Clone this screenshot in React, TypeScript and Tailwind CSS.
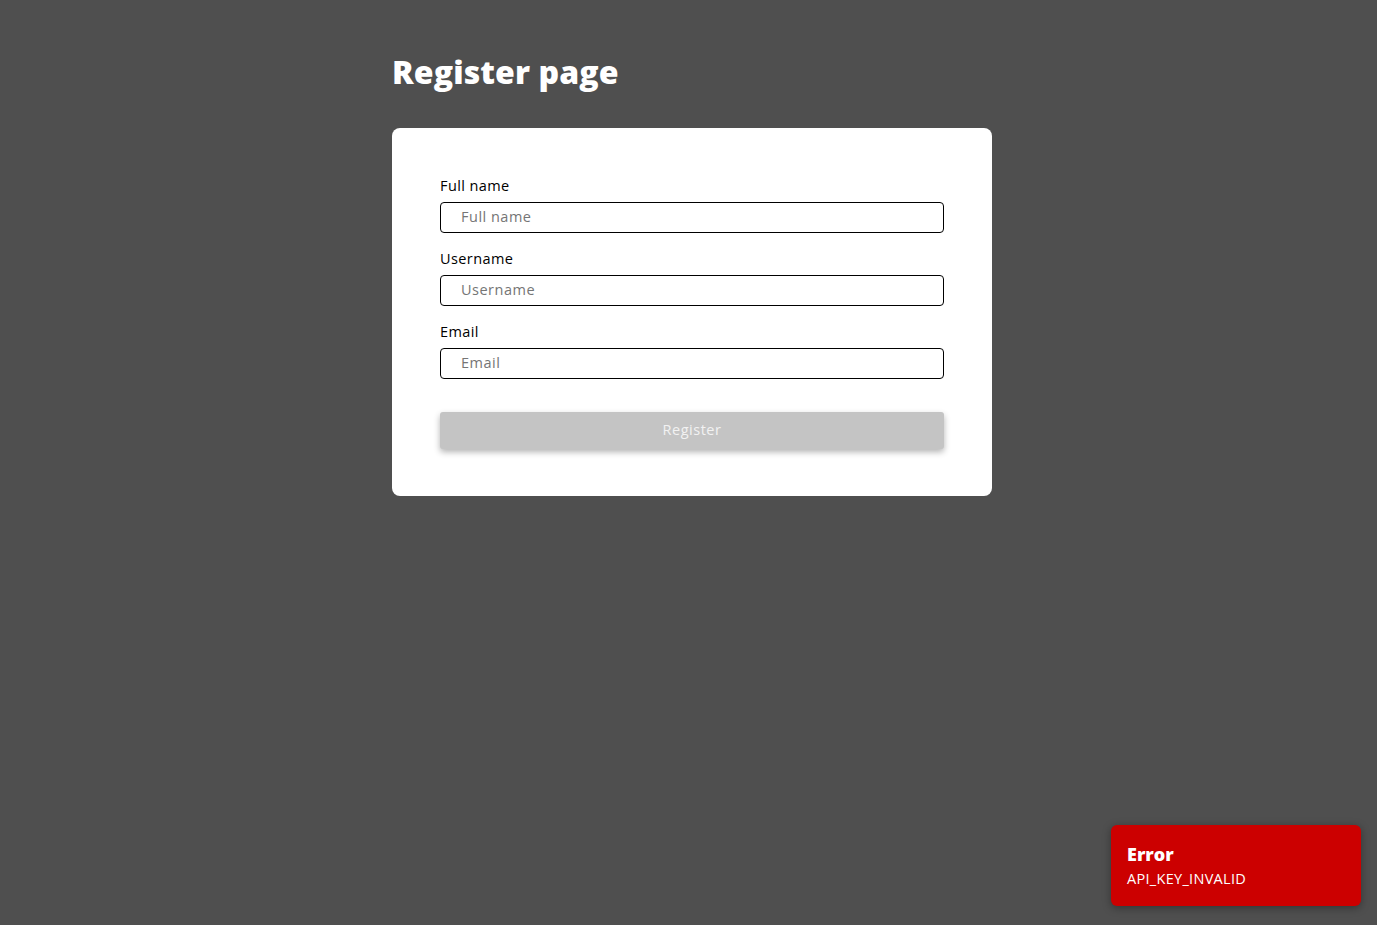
export default function App() {
  const fields = [
    { label: "Full name", placeholder: "Full name" },
    { label: "Username", placeholder: "Username" },
    { label: "Email", placeholder: "Email" },
  ];

  return (
    <div className="min-h-[925px] bg-[#4f4f4f] font-['Open_Sans',sans-serif] relative">
      <div className="w-[600px] ml-[392px] pt-[50px]">
        <h1 className="text-[32px] leading-[44px] font-extrabold text-white tracking-[0.1px]">
          Register page
        </h1>

        <div className="mt-[34px] bg-white rounded-lg px-12 pt-12 pb-[47px]">
          {fields.map((f) => (
            <div key={f.label} className="mb-4">
              <label className="block text-[14.5px] leading-[20px] tracking-[0.4px] text-black">
                {f.label}
              </label>
              <input
                className="mt-[6px] w-full h-[31px] border border-black rounded-[4px] px-5 pb-[2px] text-[14.5px] tracking-[0.5px] text-black placeholder:text-[#757575] outline-none"
                placeholder={f.placeholder}
              />
            </div>
          ))}

          <button
            disabled
            className="mt-[17px] w-full h-[37px] bg-[#c4c4c4] rounded-[3px] pb-[1px] text-[14.5px] tracking-[0.5px] text-[#f2f2f2] shadow-[0_3px_6px_rgba(0,0,0,0.3)]"
          >
            Register
          </button>
        </div>
      </div>

      <div className="absolute left-[1111px] top-[825px] w-[250px] h-[81px] bg-[#cc0000] rounded-md shadow-[0_2px_8px_rgba(0,0,0,0.35)] px-4 pt-[17px]">
        <div className="text-[18px] leading-[24px] font-extrabold text-white">Error</div>
        <div className="mt-[4px] text-[14.5px] leading-[18px] tracking-[0.3px] text-white">API_KEY_INVALID</div>
      </div>
    </div>
  );
}
